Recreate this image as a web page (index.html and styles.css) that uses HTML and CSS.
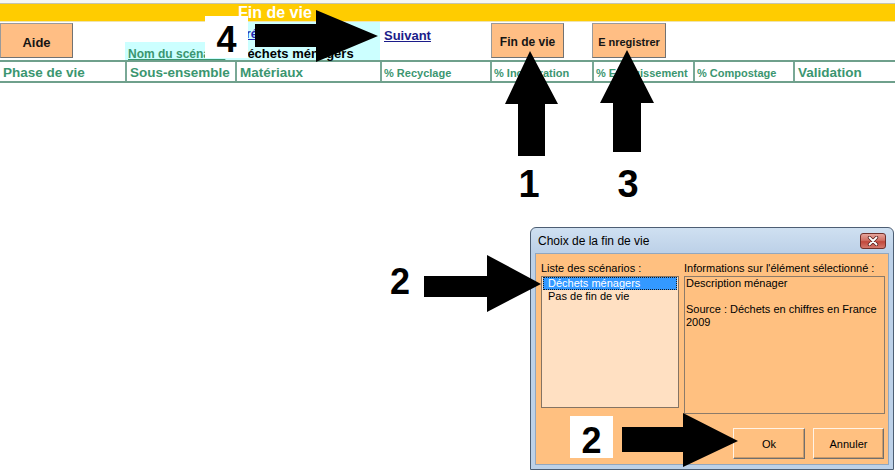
FILE: index.html
```html
<!DOCTYPE html>
<html lang="fr">
<head>
<meta charset="utf-8">
<title>Fin de vie</title>
<link rel="stylesheet" href="styles.css">
</head>
<body>
<div class="page">
  <div class="topline"></div>
  <div class="banner"><span class="banner-title">Fin de vie</span></div>

  <div class="toolbar">
    <div class="cell c1"><button class="xbtn aide">Aide</button></div>
    <div class="cell c2"><span class="label-link">Nom du scénario</span></div>
    <div class="cell c3"><a class="prev">Précédent</a><span class="scen-name">Déchets ménagers</span></div>
    <div class="cell c4"><a class="next">Suivant</a></div>
    <div class="cell c5"><button class="xbtn fdv">Fin de vie</button></div>
    <div class="cell c6"><button class="xbtn enr">Enregistrer</button></div>
    <div class="cell"></div>
    <div class="cell"></div>
  </div>

  <div class="header">
    <div class="h big">Phase de vie</div>
    <div class="h big">Sous-ensemble</div>
    <div class="h big">Matériaux</div>
    <div class="h small">% Recyclage</div>
    <div class="h small">% Incinération</div>
    <div class="h small">% Enfouissement</div>
    <div class="h small">% Compostage</div>
    <div class="h big">Validation</div>
  </div>

  <div class="dialog">
    <div class="titlebar">
      <span class="title">Choix de la fin de vie</span>
      <span class="close"><svg width="12" height="10" viewBox="0 0 12 10"><path d="M2.5 1.5 L9.5 8.5 M9.5 1.5 L2.5 8.5" stroke="#5A2320" stroke-width="3.4" stroke-linecap="round"/><path d="M2.5 1.5 L9.5 8.5 M9.5 1.5 L2.5 8.5" stroke="#ffffff" stroke-width="1.8" stroke-linecap="round"/></svg></span>
    </div>
    <div class="dbody">
      <div class="dcols">
        <div class="dcol">
          <div class="dlabel">Liste des scénarios :</div>
          <div class="listbox">
            <div class="item sel">Déchets ménagers</div>
            <div class="item">Pas de fin de vie</div>
          </div>
        </div>
        <div class="dcol">
          <div class="dlabel">Informations sur l'élément sélectionné :</div>
          <div class="infobox">Description ménager<br><br>Source : Déchets en chiffres en France 2009</div>
        </div>
      </div>
      <div class="dbuttons">
        <button class="wbtn ok">Ok</button>
        <button class="wbtn cancel">Annuler</button>
      </div>
    </div>
  </div>

  <svg class="arrows" width="895" height="470" viewBox="0 0 895 470">
    <polygon points="255,24 316,24 316,10 378,36 316,62 316,47 255,47"/>
    <polygon points="530,51 558,104 545,104 545,156 518,156 518,104 505,104"/>
    <polygon points="627,50 654,103 641,103 641,152 613,152 613,103 600,103"/>
    <polygon points="424,276 487,276 487,255 541,284 487,312 487,297 424,297"/>
    <polygon points="622,427 683,427 683,413 738,441 683,467 683,452 622,452"/>
  </svg>
  <div class="num box num4">4</div>
  <div class="num num1">1</div>
  <div class="num num3">3</div>
  <div class="num num2a">2</div>
  <div class="num box num2b">2</div>
</div>
</body>
</html>
```

FILE: styles.css
```css
* { box-sizing: border-box; }
html, body { margin: 0; padding: 0; }
body {
  width: 895px;
  height: 470px;
  overflow: hidden;
  background: #ffffff;
  font-family: "Liberation Sans", Arial, sans-serif;
}
.page {
  position: relative;
  width: 895px;
  height: 470px;
  overflow: hidden;
  background: #ffffff;
}
.topline {
  height: 4px;
  background: #f6f6f2;
  border-bottom: 1px solid #c4c4ae;
}
.banner {
  height: 18px;
  background: #ffcc00;
  border-bottom: 1px solid #efe3b0;
  padding-left: 238px;
}
.banner-title {
  display: block;
  color: #ffffff;
  font-weight: bold;
  font-size: 16px;
  line-height: 17px;
  white-space: nowrap;
}

/* toolbar row */
.toolbar {
  display: grid;
  grid-template-columns: 125px 110px 145px 110px 102px 101px 100px 1fr;
  height: 38px;
}
.cell { min-width: 0; }
.xbtn {
  appearance: none;
  display: block;
  margin: 1px 0 0 0;
  height: 35px;
  padding: 3px 0 0 0;
  background: #ffbe84;
  border: 1px solid #9a9a9a;
  border-right-color: #727272;
  border-bottom-color: #727272;
  font-family: "Liberation Sans", Arial, sans-serif;
  font-weight: bold;
  color: #151515;
  text-align: center;
}
.aide { width: 73px; font-size: 13px; }
.fdv { width: 73px; margin-left: 1px; font-size: 12px; }
.enr { width: 74px; font-size: 11px; }
.enr::first-letter { margin-right: 3px; }

.c2 {
  align-self: end;
  height: 18px;
  background: #ccffff;
  padding: 2px 0 0 3px;
  white-space: nowrap;
}
.label-link {
  font-size: 12px;
  font-weight: bold;
  line-height: 17px;
  color: #3b9670;
  text-decoration: underline;
}
.c3 {
  background: #ccffff;
  display: flex;
  flex-direction: column;
  justify-content: space-between;
  padding: 5px 0 0 3px;
  white-space: nowrap;
}
.prev {
  font-size: 12px;
  font-weight: bold;
  line-height: 14px;
  color: #2626b0;
  text-decoration: underline;
}
.scen-name {
  font-size: 13px;
  font-weight: bold;
  line-height: 13px;
  color: #000000;
}
.c4 { padding: 4px 0 0 4px; }
.next {
  font-size: 13px;
  font-weight: bold;
  line-height: 15px;
  color: #1c1c8a;
  text-decoration: underline;
}

/* column header */
.header {
  display: grid;
  grid-template-columns: 125px 110px 145px 110px 102px 101px 100px 1fr;
  height: 23px;
  border-top: 2px solid #6fa08c;
  border-bottom: 2px solid #6fa08c;
}
.h {
  border-left: 2px solid #79a896;
  padding-left: 3px;
  color: #3b9670;
  font-weight: bold;
  white-space: nowrap;
  overflow: hidden;
}
.h:first-child { border-left: none; padding-left: 3px; }
.h.big { font-size: 13.5px; line-height: 17px; padding-top: 2px; }
.h.small { font-size: 11px; line-height: 15px; padding-top: 4px; padding-left: 2px; }

/* dialog window */
.dialog {
  position: absolute;
  left: 530px;
  top: 227px;
  width: 364px;
  height: 243px;
  border: 1px solid #4d5e73;
  border-radius: 6px 6px 0 0;
  background: linear-gradient(#cfe0f1, #bdd1e8 24px, #bdd1e8);
  padding: 0 4px 4px 4px;
  font-family: "Liberation Sans", Arial, sans-serif;
  font-size: 11px;
  color: #000000;
}
.titlebar {
  height: 25px;
  display: flex;
  align-items: center;
  justify-content: space-between;
  padding-left: 3px;
}
.title { font-size: 12px; }
.close {
  width: 26px;
  height: 16px;
  margin-right: 3px;
  border: 1px solid #70302b;
  border-radius: 3px;
  background: linear-gradient(#e6a59c, #d17064 45%, #c1473b 55%, #d4786c);
  display: flex;
  align-items: center;
  justify-content: center;
}
.dbody {
  height: 212px;
  background: #ffc080;
  border: 1px solid #92a7bf;
  padding: 8px 3px 0 5px;
}
.dcols {
  display: flex;
  gap: 5px;
  align-items: flex-start;
}
.dlabel {
  height: 13px;
  line-height: 13px;
  margin-bottom: 1px;
  white-space: nowrap;
}
.listbox {
  width: 138px;
  height: 132px;
  border: 1px solid #857463;
  background: #ffe0c2;
}
.item {
  height: 13px;
  line-height: 13px;
  margin: 0 1px;
  padding-left: 5px;
  white-space: nowrap;
}
.item.sel {
  background: #3399ff;
  color: #ffffff;
  outline: 1px dotted #1a1a1a;
  outline-offset: -1px;
}
.infobox {
  width: 201px;
  height: 138px;
  border: 1px solid #8c7b6a;
  background: #ffc080;
  padding: 0 2px 0 1px;
  line-height: 13px;
}
.dbuttons {
  display: flex;
  justify-content: flex-end;
  gap: 8px;
  margin-top: 14px;
  padding-right: 1px;
}
.wbtn {
  appearance: none;
  height: 31px;
  padding: 0;
  background: #ffc080;
  border: 1px solid;
  border-color: #fff3e6 #6f6f6f #6f6f6f #fff3e6;
  box-shadow: inset -1px -1px 0 #c89a6c;
  font-family: "Liberation Sans", Arial, sans-serif;
  font-size: 11px;
  color: #000000;
}
.ok { width: 72px; }
.cancel { width: 71px; }

/* annotations */
.arrows {
  position: absolute;
  left: 0;
  top: 0;
  fill: #000000;
  pointer-events: none;
}
.num {
  position: absolute;
  width: 22px;
  height: 36px;
  font-family: "Liberation Sans", Arial, sans-serif;
  font-weight: bold;
  font-size: 36px;
  line-height: 36px;
  text-align: center;
  color: #000000;
}
.num.box {
  background: #ffffff;
  width: 43px;
  height: 42px;
}
.num4 { left: 205px; top: 16px; line-height: 48px; }
.num2b { left: 570px; top: 416px; line-height: 50px; }
.num1 { left: 518px; top: 166px; font-size: 38px; }
.num3 { left: 617px; top: 166px; font-size: 38px; }
.num2a { left: 389px; top: 264px; }
```
